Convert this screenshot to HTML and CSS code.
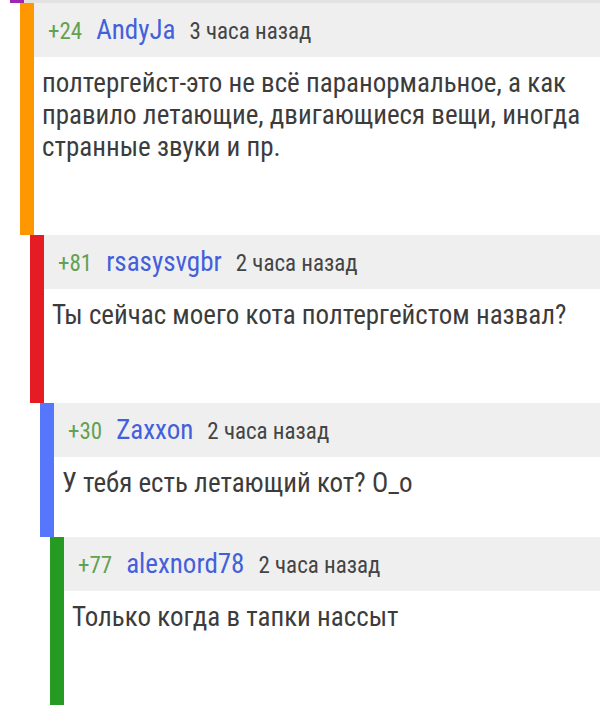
FILE: index.html
```html
<!DOCTYPE html>
<html lang="ru">
<head>
  <meta charset="UTF-8" />
  <title>Комментарии</title>
  <link rel="stylesheet" href="styles.css">
</head>
<body>
  <div class="thread">
    <!-- tail of the previous comment -->
    <div class="comment-tail"></div>

    <div class="comment level-1">
      <div class="comment-header">
        <span class="rating">+24</span>
        <span class="author">AndyJa</span>
        <span class="time">3 часа назад</span>
      </div>
      <div class="comment-body">полтергейст-это не всё паранормальное, а как правило летающие, двигающиеся вещи, иногда странные звуки и пр.</div>
    </div>

    <div class="comment level-2">
      <div class="comment-header">
        <span class="rating">+81</span>
        <span class="author">rsasysvgbr</span>
        <span class="time">2 часа назад</span>
      </div>
      <div class="comment-body">Ты сейчас моего кота полтергейстом назвал?</div>
    </div>

    <div class="comment level-3">
      <div class="comment-header">
        <span class="rating">+30</span>
        <span class="author">Zaxxon</span>
        <span class="time">2 часа назад</span>
      </div>
      <div class="comment-body short">У тебя есть летающий кот? О_о</div>
    </div>

    <div class="comment level-4">
      <div class="comment-header">
        <span class="rating">+77</span>
        <span class="author">alexnord78</span>
        <span class="time">2 часа назад</span>
      </div>
      <div class="comment-body">Только когда в тапки нассыт</div>
    </div>
  </div>
</body>
</html>
```

FILE: styles.css
```css
body {
  margin: 0;
  background: #ffffff;
  font-family: "Roboto Condensed", Roboto, sans-serif;
  color: #3c3c3c;
}

.thread {
  width: 600px;
}

.comment-tail {
  margin-left: 10px;
  height: 3px;
  border-left: 14px solid #9c27b0;
  background: #e2e2e2;
}

.comment {
  border-left: 14px solid #ccc;
}

.level-1 {
  margin-left: 20px;
  border-left-color: #ff9800;
}

.level-2 {
  margin-left: 30px;
  border-left-color: #e51c23;
}

.level-3 {
  margin-left: 40px;
  border-left-color: #5677fc;
}

.level-4 {
  margin-left: 50px;
  border-left-color: #259b24;
}

.comment-header {
  display: flex;
  align-items: baseline;
  gap: 14px;
  height: 54px;
  box-sizing: border-box;
  padding: 11px 14px 0;
  background: #efefef;
}

.rating {
  font-size: 23px;
  color: #62a152;
}

.author {
  font-size: 27px;
  color: #4360dc;
}

.time {
  font-size: 23px;
  color: #444444;
}

.comment-body {
  padding: 10px 8px 72px;
  font-size: 27px;
  line-height: 32px;
}

.comment-body.short {
  padding-bottom: 38px;
}
```
